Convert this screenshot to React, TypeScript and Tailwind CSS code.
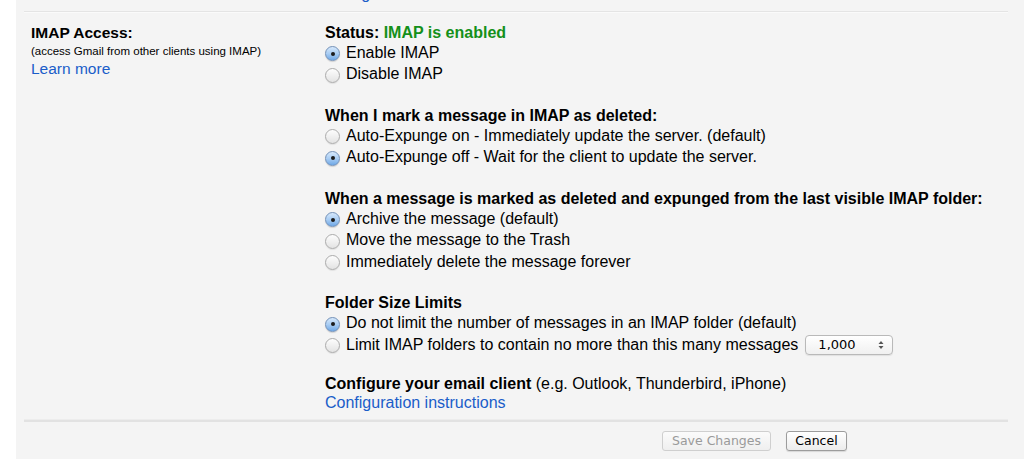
const sans = { fontFamily: '"Liberation Sans", Arial, sans-serif' };

function Radio({ checked }: { checked?: boolean }) {
  if (checked) {
    return (
      <span className="mt-[4.5px] flex h-[15px] w-[15px] shrink-0 items-center justify-center rounded-full border border-[#7391b8] bg-linear-to-b from-[#d6e8fb] via-[#a9cdf3] to-[#6fa8e6] shadow-[0_1px_1px_rgba(0,0,0,0.15)]">
        <span className="h-[4px] w-[4px] rounded-full bg-[#1b1b1b]" />
      </span>
    );
  }
  return (
    <span className="mt-[4.5px] h-[15px] w-[15px] shrink-0 rounded-full border border-[#ababab] bg-linear-to-b from-[#fdfdfd] to-[#e3e3e3] shadow-[0_1px_1px_rgba(0,0,0,0.08)]" />
  );
}

function Option({ checked, children }: { checked?: boolean; children: React.ReactNode }) {
  return (
    <div className="flex h-[21.5px] items-start gap-[6px] leading-[21.5px]">
      <Radio checked={checked} />
      <span className="whitespace-nowrap">{children}</span>
    </div>
  );
}

function Heading({ children }: { children: React.ReactNode }) {
  return <div className="whitespace-nowrap text-[16px] leading-[19px] font-bold">{children}</div>;
}

export default function App() {
  return (
    <div className="flex h-[469px] w-[1024px] bg-white text-black" style={sans}>
      <div className="ml-4 flex h-[459px] w-[1008px] flex-col bg-[#f4f4f4] pl-2 pr-4">
        {/* tail of the section above */}
        <div className="h-[11px] overflow-hidden pl-[300px]">
          <div className="-mt-[16px] text-[16px] leading-[19px] text-[#1a5dc9]">Configuration instructions</div>
        </div>
        <div className="h-px bg-[#e4e4e4]" />
        <div className="h-px bg-[#fafafa]" />

        <div className="flex h-[406px]">
          <div className="w-[301px] shrink-0 pl-[7px] pt-[9.5px]">
            <div className="text-[15.5px] leading-[19px] font-bold">IMAP Access:</div>
            <div className="mt-[1px] text-[11.5px] leading-[17px]">(access Gmail from other clients using IMAP)</div>
            <div className="-mt-[1px] text-[15.5px] leading-[19px] text-[#1a5dc9]">Learn more</div>
          </div>

          <div className="flex-1 pt-[9.5px] text-[16px]">
            <Heading>
              Status: <span className="text-[#14901a]">IMAP is enabled</span>
            </Heading>
            <Option checked>Enable IMAP</Option>
            <Option>Disable IMAP</Option>

            <div className="mt-[21px]">
              <Heading>When I mark a message in IMAP as deleted:</Heading>
              <Option>Auto-Expunge on - Immediately update the server. (default)</Option>
              <Option checked>Auto-Expunge off - Wait for the client to update the server.</Option>
            </div>

            <div className="mt-[21px]">
              <Heading>When a message is marked as deleted and expunged from the last visible IMAP folder:</Heading>
              <Option checked>Archive the message (default)</Option>
              <Option>Move the message to the Trash</Option>
              <Option>Immediately delete the message forever</Option>
            </div>

            <div className="mt-[21px]">
              <Heading>Folder Size Limits</Heading>
              <Option checked>Do not limit the number of messages in an IMAP folder (default)</Option>
              <div className="flex h-[21.5px] items-start gap-[6px] leading-[21.5px]">
                <Radio />
                <span className="whitespace-nowrap">Limit IMAP folders to contain no more than this many messages</span>
                <div
                  className="ml-[1px] mt-[1px] flex h-[20px] w-[88px] items-center justify-between rounded-[4px] border border-[#b9b9b9] bg-linear-to-b from-white to-[#f0f0f0] pl-[12px] pr-[8px] text-[13px] shadow-[0_1px_1px_rgba(0,0,0,0.08)]"
                  style={{ fontFamily: '"DejaVu Sans", sans-serif' }}
                >
                  <span>1,000</span>
                  <svg width="6" height="10" viewBox="0 0 6 10">
                    <path d="M3 1 L5.5 4 H0.5 Z" fill="#555" />
                    <path d="M3 9 L5.5 6 H0.5 Z" fill="#555" />
                  </svg>
                </div>
              </div>
            </div>

            <div className="mt-[19px]">
              <div className="whitespace-nowrap leading-[19px]">
                <span className="font-bold">Configure your email client</span> (e.g. Outlook, Thunderbird, iPhone)
              </div>
              <div className="leading-[19px] text-[#1a5dc9]">Configuration instructions</div>
            </div>
          </div>
        </div>

        <div className="h-px bg-[#ececec]" />
        <div className="h-[2px] bg-[#e2e2e2]" />

        <div
          className="flex gap-[15px] pl-[638px] pt-[9px] text-[12.5px]"
          style={{ fontFamily: '"DejaVu Sans", sans-serif' }}
        >
          <button className="flex h-[20px] w-[109px] items-center justify-center rounded-[3px] border border-[#cfcfcf] bg-linear-to-b from-[#fbfbfb] to-[#efefef] text-[#9a9a9a]">
            Save Changes
          </button>
          <button className="flex h-[20px] w-[61px] items-center justify-center rounded-[3px] border border-[#9c9c9c] bg-linear-to-b from-white to-[#ececec] text-black shadow-[0_1px_1px_rgba(0,0,0,0.12)]">
            Cancel
          </button>
        </div>
      </div>
    </div>
  );
}
